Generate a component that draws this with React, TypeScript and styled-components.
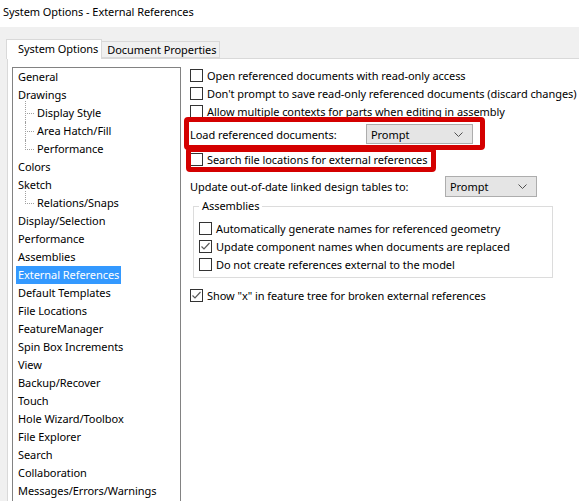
import styled, { createGlobalStyle } from "styled-components";

const GlobalStyle = createGlobalStyle`
  html, body {
    margin: 0;
    padding: 0;
    background: #f0f0f0;
  }
  body {
    font-family: "Noto Sans", "Open Sans", sans-serif;
    font-size: 11px;
    letter-spacing: -0.06px;
    color: #000;
  }
`;

type TreeNode = { label: string; children?: string[] };

const treeItems: TreeNode[] = [
  { label: "General" },
  { label: "Drawings", children: ["Display Style", "Area Hatch/Fill", "Performance"] },
  { label: "Colors" },
  { label: "Sketch", children: ["Relations/Snaps"] },
  { label: "Display/Selection" },
  { label: "Performance" },
  { label: "Assemblies" },
  { label: "External References" },
  { label: "Default Templates" },
  { label: "File Locations" },
  { label: "FeatureManager" },
  { label: "Spin Box Increments" },
  { label: "View" },
  { label: "Backup/Recover" },
  { label: "Touch" },
  { label: "Hole Wizard/Toolbox" },
  { label: "File Explorer" },
  { label: "Search" },
  { label: "Collaboration" },
  { label: "Messages/Errors/Warnings" },
];

const selectedItem = "External References";

const Checkbox = ({ checked }: { checked?: boolean }) => (
  <Box>
    {checked && (
      <svg width="11" height="11" viewBox="0 0 11 11">
        <polyline points="1.5,5.5 4,8 9.5,2" fill="none" stroke="#5a5a5a" strokeWidth="1.2" />
      </svg>
    )}
  </Box>
);

const Combo = ({ value, width }: { value: string; width: number }) => (
  <ComboBox $width={width}>
    <span>{value}</span>
    <svg width="9" height="5" viewBox="0 0 9 5">
      <polyline points="0.5,0.5 4.5,4.5 8.5,0.5" fill="none" stroke="#505050" strokeWidth="1" />
    </svg>
  </ComboBox>
);

const App = () => {
  return (
    <Window>
      <GlobalStyle />
      <TitleBar>System Options - External References</TitleBar>
      <Dialog>
        <TabStrip>
          <Tab $active>System Options</Tab>
          <Tab>Document Properties</Tab>
        </TabStrip>
        <Panel>
          <Tree>
            {treeItems.map((item) => (
              <div key={item.label}>
                <TreeItem>
                  <ItemText $selected={item.label === selectedItem}>{item.label}</ItemText>
                </TreeItem>
                {item.children && (
                  <ChildGroup>
                    {item.children.map((child) => (
                      <ChildItem key={child}>{child}</ChildItem>
                    ))}
                  </ChildGroup>
                )}
              </div>
            ))}
          </Tree>

          <Options>
            <CheckRow>
              <Checkbox />
              Open referenced documents with read-only access
            </CheckRow>
            <CheckRow>
              <Checkbox />
              Don't prompt to save read-only referenced documents (discard changes)
            </CheckRow>
            <CheckRow>
              <Checkbox />
              Allow multiple contexts for parts when editing in assembly
            </CheckRow>

            <LoadRow>
              <FieldLabel $width={176}>Load referenced documents:</FieldLabel>
              <Combo value="Prompt" width={107} />
            </LoadRow>

            <SearchRow>
              <Checkbox />
              Search file locations for external references
            </SearchRow>

            <UpdateRow>
              <FieldLabel $width={255}>Update out-of-date linked design tables to:</FieldLabel>
              <Combo value="Prompt" width={92} />
            </UpdateRow>

            <GroupBox>
              <Legend>Assemblies</Legend>
              <CheckRow>
                <Checkbox />
                Automatically generate names for referenced geometry
              </CheckRow>
              <CheckRow>
                <Checkbox checked />
                Update component names when documents are replaced
              </CheckRow>
              <CheckRow>
                <Checkbox />
                Do not create references external to the model
              </CheckRow>
            </GroupBox>

            <LastRow>
              <Checkbox checked />
              Show "x" in feature tree for broken external references
            </LastRow>
          </Options>
        </Panel>
      </Dialog>
    </Window>
  );
};

export default App;

const Window = styled.div`
  width: 579px;
  height: 501px;
  overflow: hidden;
  background: #f0f0f0;
  display: flex;
  flex-direction: column;
`;

const TitleBar = styled.div`
  height: 27px;
  flex-shrink: 0;
  background: #fff;
  padding-left: 3px;
  line-height: 24px;
`;

const Dialog = styled.div`
  flex: 1;
  display: flex;
  flex-direction: column;
  padding-top: 12px;
`;

const TabStrip = styled.div`
  display: flex;
  align-items: flex-end;
  padding-left: 6px;
  height: 19px;
  position: relative;
  z-index: 1;
`;

const Tab = styled.div<{ $active?: boolean }>`
  box-sizing: border-box;
  height: ${(p) => (p.$active ? "20px" : "17px")};
  margin-bottom: ${(p) => (p.$active ? "-1px" : "0")};
  padding: ${(p) => (p.$active ? "0 3px 0 11px" : "0 3px 0 5px")};
  background: ${(p) => (p.$active ? "#fff" : "#f0f0f0")};
  border: 1px solid #d9d9d9;
  border-bottom: ${(p) => (p.$active ? "none" : "1px solid #d9d9d9")};
  border-left: ${(p) => (p.$active ? "1px solid #d9d9d9" : "none")};
  line-height: ${(p) => (p.$active ? "17px" : "16px")};
  white-space: nowrap;
`;

const Panel = styled.div`
  flex: 1;
  display: flex;
  align-items: flex-start;
  gap: 9px;
  margin-left: 7px;
  background: #fff;
  border-top: 1px solid #d9d9d9;
  border-left: 1px solid #d9d9d9;
  padding: 8px 0 0 4px;
`;

const Tree = styled.div`
  box-sizing: border-box;
  width: 169px;
  height: 460px;
  flex-shrink: 0;
  border: 1px solid #828282;
  padding: 0 0 0 3px;
`;

const TreeItem = styled.div`
  height: 18px;
  display: flex;
  align-items: center;
`;

const ItemText = styled.span<{ $selected?: boolean }>`
  padding: 0 2px;
  line-height: 18px;
  white-space: nowrap;
  background: ${(p) => (p.$selected ? "#3399ff" : "transparent")};
  color: ${(p) => (p.$selected ? "#fff" : "#000")};
`;

const ChildGroup = styled.div`
  padding-left: 9px;
`;

const ChildItem = styled.div`
  position: relative;
  height: 18px;
  line-height: 18px;
  padding-left: 12px;
  white-space: nowrap;

  &::before {
    content: "";
    position: absolute;
    left: 0;
    top: 9px;
    width: 9px;
    border-top: 1px dotted #a0a0a0;
  }

  &::after {
    content: "";
    position: absolute;
    left: 0;
    top: 0;
    height: 18px;
    border-left: 1px dotted #a0a0a0;
  }

  &:first-child::after {
    top: -3px;
    height: 21px;
  }

  &:last-child::after {
    height: 10px;
  }

  &:first-child:last-child::after {
    height: 13px;
  }
`;

const Options = styled.div`
  display: flex;
  flex-direction: column;
  align-items: flex-start;
  margin-top: -1px;
`;

const Box = styled.span`
  box-sizing: border-box;
  width: 13px;
  height: 13px;
  flex-shrink: 0;
  border: 1px solid #333;
  background: #fff;
  margin-right: 4px;
  display: flex;
  align-items: center;
  justify-content: center;
`;

const CheckRow = styled.div`
  display: flex;
  align-items: center;
  height: 18px;
  white-space: nowrap;
`;

const FieldLabel = styled.span<{ $width: number }>`
  width: ${(p) => p.$width}px;
  white-space: nowrap;
`;

const ComboBox = styled.div<{ $width: number }>`
  box-sizing: border-box;
  width: ${(p) => p.$width}px;
  height: 100%;
  display: flex;
  align-items: center;
  justify-content: space-between;
  padding: 0 9px 0 4px;
  background: #e5e5e5;
  border: 1px solid #adadad;
`;

const LoadRow = styled.div`
  position: relative;
  display: flex;
  align-items: center;
  height: 20px;
  margin-top: 4px;

  &::after {
    content: "";
    position: absolute;
    left: -6px;
    right: -12px;
    top: -7px;
    bottom: -6px;
    border: 5px solid #d40000;
    border-radius: 4px;
    pointer-events: none;
  }
`;

const SearchRow = styled(CheckRow)`
  position: relative;
  margin-top: 6px;

  &::after {
    content: "";
    position: absolute;
    left: -4px;
    right: -9px;
    top: -3px;
    bottom: -4px;
    border: 5px solid #d40000;
    border-radius: 4px;
    pointer-events: none;
  }
`;

const UpdateRow = styled.div`
  display: flex;
  align-items: center;
  height: 21px;
  margin-top: 8px;
`;

const GroupBox = styled.fieldset`
  box-sizing: border-box;
  width: 360px;
  margin: 1px 0 0 3px;
  padding: 5px 0 4px 5px;
  border: 1px solid #dcdcdc;
  min-inline-size: 0;
`;

const Legend = styled.legend`
  padding: 0 3px;
  line-height: 16px;
`;

const LastRow = styled(CheckRow)`
  margin-top: 8px;
`;
